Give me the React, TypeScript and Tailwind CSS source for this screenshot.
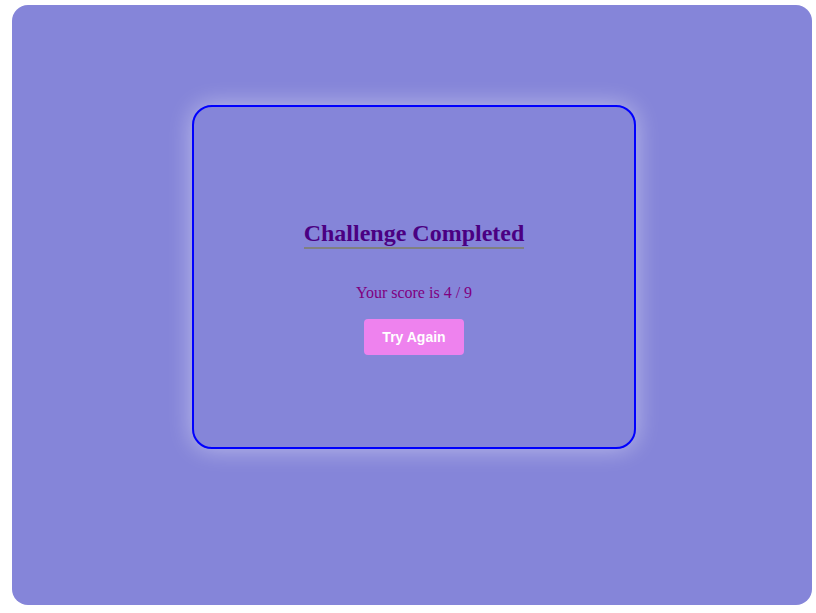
export default function App() {
  return (
    <div className="w-[816px] h-[613px] bg-white pt-[5px] pl-[12px]">
      <div className="w-[800px] h-[600px] rounded-[16px] bg-[#8585d9] pt-[100px] flex flex-col items-center">
        <div className="w-[444px] h-[344px] ml-[4px] rounded-[20px] border-2 border-[#0000ff] shadow-[0_0_24px_rgba(255,255,255,0.45)] flex flex-col items-center pt-[113px]">
          <h2
            className="text-[24px] leading-[27px] font-bold text-[#4b0082] border-b-2 border-[#808080]"
            style={{ fontFamily: '"Liberation Serif", serif' }}
          >
            Challenge Completed
          </h2>
          <p
            className="mt-[35px] text-[16px] leading-[18px] text-[#800080]"
            style={{ fontFamily: '"Liberation Serif", serif' }}
          >
            Your score is 4 / 9
          </p>
          <button
            className="mt-[17px] w-[100px] h-[36px] rounded-[4px] bg-[#ee82ee] text-white font-bold text-[14px]"
            style={{ fontFamily: '"Liberation Sans", Arial, sans-serif' }}
          >
            Try Again
          </button>
        </div>
      </div>
    </div>
  );
}
